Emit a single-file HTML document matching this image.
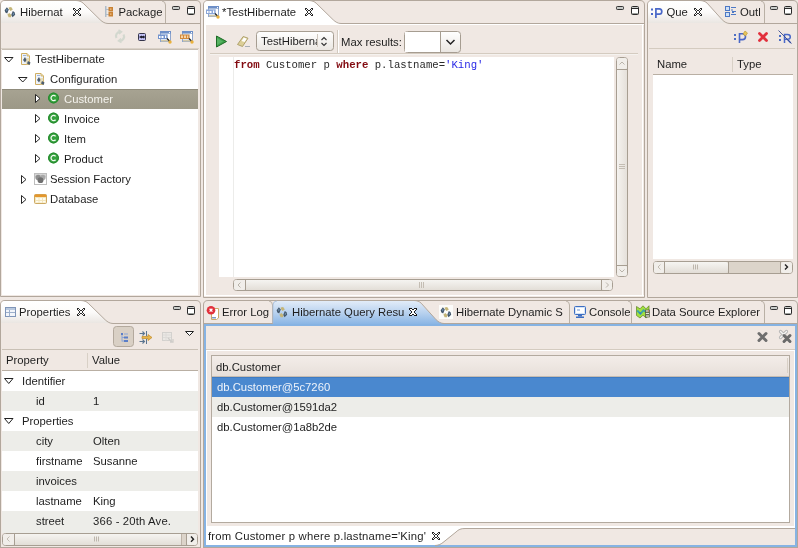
<!DOCTYPE html>
<html><head><meta charset="utf-8">
<style>
*{margin:0;padding:0}
html,body{width:798px;height:548px;overflow:hidden;background:#F0E8E3}
svg{position:absolute;left:0;top:0;will-change:transform}
text{font-family:"Liberation Sans",sans-serif;font-size:11.3px;fill:#1e1e1e}
.mono{font-family:"Liberation Mono",monospace;font-size:10.67px}
</style></head><body>
<svg width="798" height="548" viewBox="0 0 798 548">
<defs>
<linearGradient id="tabg" x1="0" y1="0" x2="0" y2="1">
<stop offset="0" stop-color="#FFFFFF"/><stop offset="0.5" stop-color="#FCFBFA"/><stop offset="1" stop-color="#EAE6E2"/>
</linearGradient>
<linearGradient id="tabblue" x1="0" y1="0" x2="0" y2="1">
<stop offset="0" stop-color="#E2ECF8"/><stop offset="0.5" stop-color="#B6D0EE"/><stop offset="1" stop-color="#82B1E3"/>
</linearGradient>
<linearGradient id="btng" x1="0" y1="0" x2="0" y2="1">
<stop offset="0" stop-color="#FFFFFF"/><stop offset="1" stop-color="#EAE6E1"/>
</linearGradient>
<linearGradient id="sbg" x1="0" y1="0" x2="1" y2="0">
<stop offset="0" stop-color="#F6F4F1"/><stop offset="1" stop-color="#E4DFD9"/>
</linearGradient>
<linearGradient id="sbh" x1="0" y1="0" x2="0" y2="1">
<stop offset="0" stop-color="#F6F5F2"/><stop offset="1" stop-color="#E2DDD6"/>
</linearGradient>
<linearGradient id="hdrg" x1="0" y1="0" x2="0" y2="1">
<stop offset="0" stop-color="#F3EDE9"/><stop offset="1" stop-color="#E7DFD9"/>
</linearGradient>
<linearGradient id="selg" x1="0" y1="0" x2="0" y2="1">
<stop offset="0" stop-color="#A7A392"/><stop offset="1" stop-color="#9C9887"/>
</linearGradient>
<g id="hib"><path d="M0.6,4.2 L2.9,1.2 L4.8,3.6 L3.2,7.6 L1.4,6.6 Z" fill="#44576B"/><path d="M2,4 L3,2.6 L3.6,3.8 L2.8,5.6 Z" fill="#6D93B3"/><path d="M4.6,1.6 L7.2,0.9 L8.8,3.4 L6.6,5 L5.2,3.4 Z" fill="#C4B577"/><path d="M7.2,9 L8.8,5 L10.6,6.2 L11.2,8.8 L8.6,11.2 Z" fill="#44576B"/><path d="M8.6,8.6 L9.2,6.6 L10,7.6 L9.6,9.2 Z" fill="#6D93B3"/><path d="M3.4,8.6 L5.4,7 L7.4,9 L7,11.2 L4.6,11.2 Z" fill="#C4B577"/></g>
<g id="cls"><circle cx="0" cy="0" r="5.4" fill="#35A23D"/><circle cx="0" cy="0" r="4.9" fill="none" stroke="#24862C" stroke-width="1"/><path d="M2.1,-1.7 A2.6,2.6 0 1 0 2.1,1.7" fill="none" stroke="#F2FAF0" stroke-width="1.3"/></g>
<g id="tri-r"><path d="M0.5,0.5 L5,4.5 L0.5,8.5 Z" fill="#FFFFFF" stroke="#1a1a1a" stroke-width="0.95" stroke-linejoin="miter"/></g>
<g id="tri-d"><path d="M0.5,0.5 L9,0.5 L4.75,5 Z" fill="#FFFFFF" stroke="#1a1a1a" stroke-width="0.95"/></g>
<g id="closex"><rect x="0" y="0" width="1" height="1" fill="#2a2a2a"/><rect x="1" y="0" width="1" height="1" fill="#2a2a2a"/><rect x="6" y="0" width="1" height="1" fill="#2a2a2a"/><rect x="7" y="0" width="1" height="1" fill="#2a2a2a"/><rect x="0" y="1" width="1" height="1" fill="#2a2a2a"/><rect x="1" y="1" width="1" height="1" fill="#FFFFFF"/><rect x="2" y="1" width="1" height="1" fill="#2a2a2a"/><rect x="5" y="1" width="1" height="1" fill="#2a2a2a"/><rect x="6" y="1" width="1" height="1" fill="#FFFFFF"/><rect x="7" y="1" width="1" height="1" fill="#2a2a2a"/><rect x="1" y="2" width="1" height="1" fill="#2a2a2a"/><rect x="2" y="2" width="1" height="1" fill="#FFFFFF"/><rect x="3" y="2" width="1" height="1" fill="#2a2a2a"/><rect x="4" y="2" width="1" height="1" fill="#2a2a2a"/><rect x="5" y="2" width="1" height="1" fill="#FFFFFF"/><rect x="6" y="2" width="1" height="1" fill="#2a2a2a"/><rect x="2" y="3" width="1" height="1" fill="#2a2a2a"/><rect x="3" y="3" width="1" height="1" fill="#FFFFFF"/><rect x="4" y="3" width="1" height="1" fill="#FFFFFF"/><rect x="5" y="3" width="1" height="1" fill="#2a2a2a"/><rect x="2" y="4" width="1" height="1" fill="#2a2a2a"/><rect x="3" y="4" width="1" height="1" fill="#FFFFFF"/><rect x="4" y="4" width="1" height="1" fill="#FFFFFF"/><rect x="5" y="4" width="1" height="1" fill="#2a2a2a"/><rect x="1" y="5" width="1" height="1" fill="#2a2a2a"/><rect x="2" y="5" width="1" height="1" fill="#FFFFFF"/><rect x="3" y="5" width="1" height="1" fill="#2a2a2a"/><rect x="4" y="5" width="1" height="1" fill="#2a2a2a"/><rect x="5" y="5" width="1" height="1" fill="#FFFFFF"/><rect x="6" y="5" width="1" height="1" fill="#2a2a2a"/><rect x="0" y="6" width="1" height="1" fill="#2a2a2a"/><rect x="1" y="6" width="1" height="1" fill="#FFFFFF"/><rect x="2" y="6" width="1" height="1" fill="#2a2a2a"/><rect x="5" y="6" width="1" height="1" fill="#2a2a2a"/><rect x="6" y="6" width="1" height="1" fill="#FFFFFF"/><rect x="7" y="6" width="1" height="1" fill="#2a2a2a"/><rect x="0" y="7" width="1" height="1" fill="#2a2a2a"/><rect x="1" y="7" width="1" height="1" fill="#2a2a2a"/><rect x="6" y="7" width="1" height="1" fill="#2a2a2a"/><rect x="7" y="7" width="1" height="1" fill="#2a2a2a"/></g>
<g id="closex2"><rect x="0" y="0" width="1" height="1" fill="#1a1a1a"/><rect x="1" y="0" width="1" height="1" fill="#1a1a1a"/><rect x="2" y="0" width="1" height="1" fill="#1a1a1a"/><rect x="5" y="0" width="1" height="1" fill="#1a1a1a"/><rect x="6" y="0" width="1" height="1" fill="#1a1a1a"/><rect x="7" y="0" width="1" height="1" fill="#1a1a1a"/><rect x="0" y="1" width="1" height="1" fill="#1a1a1a"/><rect x="1" y="1" width="1" height="1" fill="#FFFFFF"/><rect x="2" y="1" width="1" height="1" fill="#FFFFFF"/><rect x="3" y="1" width="1" height="1" fill="#1a1a1a"/><rect x="4" y="1" width="1" height="1" fill="#1a1a1a"/><rect x="5" y="1" width="1" height="1" fill="#FFFFFF"/><rect x="6" y="1" width="1" height="1" fill="#FFFFFF"/><rect x="7" y="1" width="1" height="1" fill="#1a1a1a"/><rect x="1" y="2" width="1" height="1" fill="#1a1a1a"/><rect x="2" y="2" width="1" height="1" fill="#FFFFFF"/><rect x="3" y="2" width="1" height="1" fill="#FFFFFF"/><rect x="4" y="2" width="1" height="1" fill="#FFFFFF"/><rect x="5" y="2" width="1" height="1" fill="#FFFFFF"/><rect x="6" y="2" width="1" height="1" fill="#1a1a1a"/><rect x="2" y="3" width="1" height="1" fill="#1a1a1a"/><rect x="3" y="3" width="1" height="1" fill="#FFFFFF"/><rect x="4" y="3" width="1" height="1" fill="#FFFFFF"/><rect x="5" y="3" width="1" height="1" fill="#1a1a1a"/><rect x="2" y="4" width="1" height="1" fill="#1a1a1a"/><rect x="3" y="4" width="1" height="1" fill="#FFFFFF"/><rect x="4" y="4" width="1" height="1" fill="#FFFFFF"/><rect x="5" y="4" width="1" height="1" fill="#1a1a1a"/><rect x="1" y="5" width="1" height="1" fill="#1a1a1a"/><rect x="2" y="5" width="1" height="1" fill="#FFFFFF"/><rect x="3" y="5" width="1" height="1" fill="#FFFFFF"/><rect x="4" y="5" width="1" height="1" fill="#FFFFFF"/><rect x="5" y="5" width="1" height="1" fill="#FFFFFF"/><rect x="6" y="5" width="1" height="1" fill="#1a1a1a"/><rect x="0" y="6" width="1" height="1" fill="#1a1a1a"/><rect x="1" y="6" width="1" height="1" fill="#FFFFFF"/><rect x="2" y="6" width="1" height="1" fill="#FFFFFF"/><rect x="3" y="6" width="1" height="1" fill="#1a1a1a"/><rect x="4" y="6" width="1" height="1" fill="#1a1a1a"/><rect x="5" y="6" width="1" height="1" fill="#FFFFFF"/><rect x="6" y="6" width="1" height="1" fill="#FFFFFF"/><rect x="7" y="6" width="1" height="1" fill="#1a1a1a"/><rect x="0" y="7" width="1" height="1" fill="#1a1a1a"/><rect x="1" y="7" width="1" height="1" fill="#1a1a1a"/><rect x="2" y="7" width="1" height="1" fill="#1a1a1a"/><rect x="5" y="7" width="1" height="1" fill="#1a1a1a"/><rect x="6" y="7" width="1" height="1" fill="#1a1a1a"/><rect x="7" y="7" width="1" height="1" fill="#1a1a1a"/></g>
<g id="minbtn"><rect x="0.5" y="0.5" width="7" height="3" rx="0.8" fill="#C9CCC9" stroke="#333" stroke-width="1"/></g>
<g id="maxbtn"><rect x="0.5" y="0.5" width="7" height="8" rx="1" fill="#FFFFFF" stroke="#2a2a2a" stroke-width="1"/><rect x="1" y="1" width="6" height="1" fill="#C9CCC9"/><rect x="1" y="2" width="6" height="1" fill="#2a2a2a"/><rect x="1" y="7" width="6" height="1" fill="#9A9E9A"/></g>
</defs>
<!-- ============ P1 ============ -->
<path d="M0.5,296.5 L0.5,5 Q0.5,0.5 5,0.5 L196,0.5 Q200.5,0.5 200.5,5 L200.5,296.5 Z" fill="#F0E8E3" stroke="#B2A79C"/>
<!-- active tab -->
<path d="M1,23 L1,5 Q1,1 5,1 L76,1 C79,1 81,2 83,3.5 L100,19.5 C102.5,22 105,23 108,23 Z" fill="url(#tabg)"/>
<path d="M76,0.5 C79,0.5 81.5,1.5 83.2,3.2 L100.2,19.8 C102.5,22 105,23.5 108,23.5 L200,23.5" fill="none" stroke="#B2A79C"/>
<path d="M165.5,23 L165.5,5 Q165.5,1.5 162,1" fill="none" stroke="#B9B0A5"/>
<!-- hibernate icon -->
<use href="#hib" x="4" y="6"/>
<text x="20" y="16">Hibernat</text>
<use href="#closex" x="73" y="8"/>
<!-- package icon -->
<g transform="translate(105,6)"><rect x="0" y="0" width="1.5" height="11" fill="#AEBBC8"/><rect x="1" y="3" width="3" height="1" fill="#AEBBC8"/><rect x="1" y="8" width="3" height="1" fill="#AEBBC8"/><rect x="3.5" y="1" width="4.5" height="4.5" fill="#C98234"/><rect x="3.5" y="6" width="4.5" height="4.5" fill="#C98234"/><rect x="5" y="2.5" width="1.5" height="1.2" fill="#F3C38B"/><rect x="5" y="7.5" width="1.5" height="1.2" fill="#F3C38B"/></g>
<text x="118.5" y="16">Package</text>
<use href="#minbtn" x="172" y="6"/>
<use href="#maxbtn" x="187" y="6"/>
<!-- toolbar -->
<g transform="translate(114,30)" fill="none" stroke="#D3D8CF" stroke-width="2.2"><path d="M2.5,8 A4.2,4.2 0 0 1 6,1.8"/><path d="M9.5,4.5 A4.2,4.2 0 0 1 6,10.8"/><path d="M4.5,0 L7.5,1.8 L5,4" stroke-width="1.6"/><path d="M7.5,12.5 L4.5,10.8 L7,8.5" stroke-width="1.6"/></g>
<g transform="translate(138,33)"><rect x="0.5" y="0.5" width="7" height="7" rx="1" fill="#C3C2F6" stroke="#35354A" stroke-width="1"/><path d="M1.5,4 L3.5,2.5 L4.5,3.5 L5.5,2.5 L7,4 L5.5,5.5 L4.5,4.5 L3.5,5.5 Z" fill="#202030"/><rect x="1.5" y="3.5" width="5" height="1" fill="#202030"/></g>
<g transform="translate(158,31)"><rect x="2.5" y="0.5" width="10" height="10" fill="#DDE5F0" stroke="#8FA6CE"/><rect x="2" y="0" width="11" height="2.5" fill="#6D8FC8"/><rect x="11" y="1" width="1" height="1" fill="#FFF"/><rect x="3" y="9" width="7" height="1.5" fill="#D3C9A8"/><rect x="10" y="3" width="2" height="6" fill="#FFFFFF"/><rect x="0" y="3.5" width="9.5" height="4.5" fill="#7394CE"/><rect x="1" y="5" width="1.5" height="2" fill="#FFF"/><rect x="3.5" y="5" width="2" height="2" fill="#FFF"/><rect x="7" y="4.5" width="1.2" height="2.5" fill="#FFF"/><path d="M9,7.5 L11.5,10" stroke="#222" stroke-width="1.2"/><circle cx="12" cy="11" r="1.7" fill="#EAB13A"/></g>
<g transform="translate(180,31)"><rect x="2.5" y="0.5" width="10" height="10" fill="#DDE5F0" stroke="#8FA6CE"/><rect x="2" y="0" width="11" height="2.5" fill="#6D8FC8"/><rect x="11" y="1" width="1" height="1" fill="#FFF"/><rect x="3" y="9" width="7" height="1.5" fill="#D3C9A8"/><rect x="10" y="3" width="2" height="6" fill="#FFFFFF"/><rect x="0" y="3.5" width="9.5" height="4.5" fill="#D28A3C"/><rect x="1" y="4.5" width="2" height="2.5" fill="#F6D3A8"/><rect x="4" y="4.5" width="2" height="2.5" fill="#F6D3A8"/><rect x="7" y="4.5" width="1.2" height="2.5" fill="#F6D3A8"/><path d="M9,7.5 L11.5,10" stroke="#222" stroke-width="1.2"/><circle cx="12" cy="11" r="1.7" fill="#EAB13A"/></g>
<rect x="1" y="48" width="198" height="1" fill="#D9D1C7"/>
<rect x="2" y="49" width="196" height="1" fill="#C6BDB2"/>
<!-- content -->
<rect x="2" y="50" width="196" height="245" fill="#FFFFFF"/>
<use href="#tri-d" x="4" y="57"/>
<g transform="translate(21,53)"><path d="M0.5,0.5 H6 L8.5,3 V11.5 H0.5 Z" fill="#EEF3FA" stroke="#CFAE62"/><path d="M6,0.5 V3 H8.5" fill="#E9D9A8" stroke="#CFAE62" stroke-width="0.8"/><rect x="2" y="2" width="3" height="1" fill="#9DB4D8"/><rect x="5" y="5" width="3.5" height="6.5" fill="#E3D3A0" opacity="0.7"/><path d="M2,7 L4,4 L5.5,7 L4,9.5 Z" fill="#4D5D6E"/><path d="M7,8 L9.5,9.5 L8.5,12 L6,10.5 Z" fill="#4D5D6E"/></g>
<text x="35" y="63">TestHibernate</text>
<use href="#tri-d" x="18" y="77"/>
<g transform="translate(35,73)"><path d="M0.5,0.5 H6 L8.5,3 V11.5 H0.5 Z" fill="#EEF3FA" stroke="#CFAE62"/><path d="M6,0.5 V3 H8.5" fill="#E9D9A8" stroke="#CFAE62" stroke-width="0.8"/><rect x="2" y="2" width="3" height="1" fill="#9DB4D8"/><rect x="5" y="5" width="3.5" height="6.5" fill="#E3D3A0" opacity="0.7"/><path d="M2,7 L4,4 L5.5,7 L4,9.5 Z" fill="#4D5D6E"/><path d="M7,8 L9.5,9.5 L8.5,12 L6,10.5 Z" fill="#4D5D6E"/></g>
<text x="50" y="83">Configuration</text>
<rect x="2" y="89" width="196" height="20" fill="url(#selg)"/>
<rect x="2" y="89" width="196" height="1" fill="#8F8B7B"/>
<use href="#tri-r" x="35" y="94"/>
<use href="#cls" x="53.5" y="98"/>
<text x="64" y="103" style="fill:#F4F2EC">Customer</text>
<use href="#tri-r" x="35" y="114"/>
<use href="#cls" x="53.5" y="118"/>
<text x="64" y="123">Invoice</text>
<use href="#tri-r" x="35" y="134"/>
<use href="#cls" x="53.5" y="138"/>
<text x="64" y="143">Item</text>
<use href="#tri-r" x="35" y="154"/>
<use href="#cls" x="53.5" y="158"/>
<text x="64" y="163">Product</text>
<use href="#tri-r" x="21" y="175"/>
<g transform="translate(34,173)"><rect x="0.5" y="0.5" width="12" height="11" fill="#FFFFFF" stroke="#BDBDBD"/><rect x="1" y="1" width="11" height="3" fill="#D6D6D6"/><circle cx="4.2" cy="4.5" r="2.8" fill="#8E8E8E"/><circle cx="8.8" cy="4.5" r="2.8" fill="#A8A8A8"/><circle cx="6.5" cy="7.2" r="2.9" fill="#707070"/></g>
<text x="50" y="183">Session Factory</text>
<use href="#tri-r" x="21" y="195"/>
<g transform="translate(34,194)"><rect x="0.5" y="0.5" width="12" height="9" rx="1" fill="#F3E6BE" stroke="#CDA962"/><rect x="0.5" y="0.5" width="12" height="2.5" rx="1" fill="#E4962C"/><rect x="2" y="4" width="2.5" height="2" fill="#FFFCEF"/><rect x="5.5" y="4" width="2.5" height="2" fill="#FFFCEF"/><rect x="9" y="4" width="2.5" height="2" fill="#FFFCEF"/><rect x="2" y="7" width="2.5" height="1.5" fill="#FFFCEF"/><rect x="5.5" y="7" width="2.5" height="1.5" fill="#FFFCEF"/><rect x="9" y="7" width="2.5" height="1.5" fill="#FFFCEF"/></g>
<text x="50" y="203">Database</text>
<!-- ============ P2 editor ============ -->
<path d="M203.5,297.5 L203.5,5 Q203.5,0.5 208,0.5 L640,0.5 Q644.5,0.5 644.5,5 L644.5,297.5 Z" fill="#F0E8E3" stroke="#B2A79C"/>
<path d="M204,24 L204,5 Q204,1 208,1 L309,1 C312,1 314,2 316,3.5 L333,19.5 C335.5,22 338,23 341,23 L644,23 L644,25 L204,25 Z" fill="#FFFFFF"/>
<path d="M309,0.5 C312,0.5 314.5,1.5 316.2,3.2 L333.2,19.8 C335.5,22 338,23.5 341,23.5 L644,23.5" fill="none" stroke="#B2A79C"/>
<rect x="204" y="24" width="440" height="1" fill="#FFFFFF"/>
<rect x="204" y="24" width="2" height="272" fill="#FFFFFF"/>
<rect x="204" y="295" width="440" height="1" fill="#FFFFFF"/>
<rect x="642" y="24" width="1" height="272" fill="#FFFFFF"/>
<!-- editor tab icon -->
<g transform="translate(206,6)"><rect x="2.5" y="0.5" width="10" height="10" fill="#DDE5F0" stroke="#8FA6CE"/><rect x="2" y="0" width="11" height="2.5" fill="#6D8FC8"/><rect x="11" y="1" width="1" height="1" fill="#FFF"/><rect x="3" y="9" width="7" height="1.5" fill="#D3C9A8"/><rect x="10" y="3" width="2" height="6" fill="#FFFFFF"/><rect x="0" y="3.5" width="9.5" height="4.5" fill="#8AA6D8"/><rect x="1" y="5" width="1.5" height="2" fill="#FFF"/><rect x="3.5" y="5" width="2" height="2" fill="#FFF"/><rect x="7" y="4.5" width="1.2" height="2.5" fill="#FFF"/><path d="M9,7.5 L11.5,10" stroke="#222" stroke-width="1.2"/><circle cx="12" cy="11" r="1.7" fill="#EAB13A"/></g>
<text x="222" y="16">*TestHibernate</text>
<use href="#closex" x="305" y="8"/>
<use href="#minbtn" x="616" y="6"/>
<use href="#maxbtn" x="631" y="6"/>
<!-- toolbar -->
<path d="M216.5,36 L226.5,41.5 L216.5,47 Z" fill="#3DA14A" stroke="#1E6B26" stroke-width="1"/>
<path d="M217,38 L223,41.5 L217,45 Z" fill="#6CC077" opacity="0.6"/>
<path d="M237.5,44.5 L243.2,36.5 L248,38.2 L242.5,46.5 Z" fill="#DCCF98" stroke="#A99B63" stroke-width="0.9" stroke-linejoin="round"/><path d="M243.8,37.6 L246.8,38.7 L244.6,42 L241.5,40.9 Z" fill="#FFFFFF"/><path d="M245,46.5 h5" stroke="#A7AEB5" stroke-width="1"/>
<rect x="256.5" y="31.5" width="77" height="19" rx="3" fill="url(#btng)" stroke="#A69D91"/>
<svg x="257" y="32" width="60" height="18"><text x="4" y="13">TestHibernate</text></svg>
<rect x="317" y="34" width="1" height="13" fill="#CFC7BD"/>
<path d="M321.5,40 L324,37.5 L326.5,40 M321.5,43 L324,45.5 L326.5,43" fill="none" stroke="#333" stroke-width="1.1"/>
<rect x="337" y="30" width="1" height="23" fill="#D3CBC1"/>
<rect x="338" y="30" width="1" height="23" fill="#FFFFFF"/>
<text x="341" y="46">Max results:</text>
<rect x="404.5" y="31.5" width="56" height="21" rx="3" fill="url(#btng)" stroke="#A69D91"/>
<rect x="405" y="32" width="35" height="20" fill="#FFFFFF"/>
<rect x="440" y="32" width="1" height="20" fill="#A69D91"/>
<path d="M446.5,40 L450.5,44 L454.5,40" fill="none" stroke="#222" stroke-width="1.5"/>
<rect x="210" y="53" width="428" height="1" fill="#D4CBC0"/>
<rect x="210" y="54" width="428" height="1" fill="#F5F2EF"/>
<!-- code area -->
<rect x="219" y="57" width="395" height="220" fill="#FFFFFF"/>
<rect x="233" y="57" width="1" height="220" fill="#ECECEA"/>
<text class="mono" x="234" y="68"><tspan style="font-weight:bold;fill:#820A10">from</tspan><tspan style="fill:#2b2b2b"> Customer p </tspan><tspan style="font-weight:bold;fill:#820A10">where</tspan><tspan style="fill:#2b2b2b"> p.lastname=</tspan><tspan style="fill:#2A2AE6">'King'</tspan></text>
<!-- v scrollbar -->
<rect x="616.5" y="57.5" width="11" height="219" rx="3" fill="url(#sbg)" stroke="#A79E92"/>
<rect x="617" y="69" width="10" height="1" fill="#A79E92"/>
<rect x="617" y="265" width="10" height="1" fill="#A79E92"/>
<rect x="617" y="58" width="10" height="11" rx="2" fill="#F1EEEA"/>
<rect x="617" y="266" width="10" height="10" rx="2" fill="#F1EEEA"/>
<path d="M619.5,64.5 L622,62 L624.5,64.5" fill="none" stroke="#B9B3AA" stroke-width="1"/>
<path d="M619.5,269.5 L622,272 L624.5,269.5" fill="none" stroke="#B9B3AA" stroke-width="1"/>
<path d="M619,164.5 h6 M619,166.5 h6 M619,168.5 h6" stroke="#C4BDB3" stroke-width="1"/>
<!-- h scrollbar -->
<rect x="233.5" y="279.5" width="379" height="11" rx="3" fill="url(#sbh)" stroke="#A79E92"/>
<rect x="245" y="280" width="1" height="10" fill="#A79E92"/>
<rect x="601" y="280" width="1" height="10" fill="#A79E92"/>
<rect x="234" y="280" width="11" height="10" rx="2" fill="#F1EEEA"/>
<rect x="602" y="280" width="10" height="10" rx="2" fill="#F1EEEA"/>
<path d="M240.5,282.5 L238,285 L240.5,287.5" fill="none" stroke="#B9B3AA" stroke-width="1"/>
<path d="M606,282.5 L608.5,285 L606,287.5" fill="none" stroke="#B9B3AA" stroke-width="1"/>
<path d="M419.5,282 v6 M421.5,282 v6 M423.5,282 v6" stroke="#C4BDB3" stroke-width="1"/>
<!-- ============ P3 right ============ -->
<path d="M647.5,297.5 L647.5,5 Q647.5,0.5 652,0.5 L793,0.5 Q797.5,0.5 797.5,5 L797.5,297.5 Z" fill="#F0E8E3" stroke="#B2A79C"/>
<path d="M648,23 L648,5 Q648,1 652,1 L700,1 C703,1 705,2 707,3.5 L722,19.5 C724.5,22 727,23 730,23 Z" fill="url(#tabg)"/>
<path d="M700,0.5 C703,0.5 705.5,1.5 707.2,3.2 L722.2,19.8 C724.5,22 727,23.5 730,23.5 L797,23.5" fill="none" stroke="#B2A79C"/>
<path d="M764.5,23 L764.5,5 Q764.5,1.5 761,1" fill="none" stroke="#B9B0A5"/>
<!-- :P icon -->
<g fill="#4A68C8"><rect x="651" y="8.5" width="2" height="2"/><rect x="651" y="13" width="2" height="2"/></g>
<path d="M655.9,18 V8.8 H659.3 Q661.8,8.8 661.8,11.5 Q661.8,14.2 659.3,14.2 H655.9" fill="none" stroke="#4A68C8" stroke-width="1.7"/>
<text x="666.5" y="16">Que</text>
<use href="#closex" x="694" y="8"/>
<!-- outline icon -->
<g transform="translate(725,6)"><rect x="0.5" y="0.5" width="4" height="4" fill="#CFE0F5" stroke="#4D78C4"/><rect x="0.5" y="6.5" width="4" height="4" fill="#CFE0F5" stroke="#4D78C4"/><path d="M6,1.5 h5 M6,4 h2 M8,5.5 h3 M6,8.5 h5" stroke="#4D78C4" stroke-width="1"/><rect x="7" y="5" width="2" height="2" fill="#4D78C4"/></g>
<text x="740" y="16">Outl</text>
<use href="#minbtn" x="770" y="6"/>
<use href="#maxbtn" x="784" y="6"/>
<!-- toolbar icons -->
<g fill="#4D6EC4"><rect x="734" y="34" width="2" height="2"/><rect x="734" y="38" width="2" height="2"/></g>
<path d="M739.5,43 V33.8 H742.5 Q745.5,33.8 745.5,36.8 Q745.5,39.6 742.5,39.6 H739.5" fill="none" stroke="#4A68C8" stroke-width="1.6"/>
<path d="M743,34 L745,31 L747.5,33 L745.5,36 Z" fill="#E7C55A" stroke="#B8952E" stroke-width="0.6"/>
<path d="M759.5,33.5 L766.5,40.5 M766.5,33.5 L759.5,40.5" stroke="#E2303C" stroke-width="2.8" stroke-linecap="round"/>
<g fill="#4D6EC4"><rect x="779" y="35" width="2" height="2"/><rect x="779" y="39" width="2" height="2"/></g>
<path d="M784.5,43 V34.5 H787.5 Q790.3,34.5 790.3,37 Q790.3,39.3 787.5,39.3 H784.5 M787.3,39.3 L790.8,43" fill="none" stroke="#4A68C8" stroke-width="1.5"/>
<path d="M778.5,30.5 L791.5,43.5" stroke="#34488E" stroke-width="0.9"/>
<rect x="649" y="48" width="146" height="1" fill="#D4CBC0"/>
<!-- table header -->
<text x="657" y="68">Name</text>
<rect x="732" y="57" width="1" height="15" fill="#D8D0C6"/>
<text x="737" y="68">Type</text>
<rect x="653" y="74" width="140" height="1" fill="#B9AFA3"/>
<rect x="653" y="75" width="140" height="184" fill="#FFFFFF"/>
<!-- h scrollbar -->
<rect x="653.5" y="261.5" width="139" height="12" rx="3" fill="#DCD4CA" stroke="#A79E92"/>
<rect x="654" y="262" width="74" height="11" rx="2" fill="url(#sbh)"/>
<rect x="664" y="262" width="1" height="11" fill="#A79E92"/>
<rect x="728" y="262" width="1" height="11" fill="#A79E92"/>
<rect x="780" y="262" width="1" height="11" fill="#A79E92"/>
<rect x="654" y="262" width="10" height="11" rx="2" fill="#F1EEEA"/>
<rect x="781" y="262" width="11" height="11" rx="2" fill="#F1EEEA"/>
<path d="M660.5,264.5 L658,267 L660.5,269.5" fill="none" stroke="#C3BDB4" stroke-width="1"/>
<path d="M785,264.5 L787.5,267 L785,269.5" fill="none" stroke="#222" stroke-width="1.4"/>
<path d="M693.5,264.5 v5 M695.5,264.5 v5 M697.5,264.5 v5" stroke="#BDB6AC" stroke-width="1"/>
<!-- ============ P4 properties ============ -->
<path d="M0.5,548 L0.5,305 Q0.5,300.5 5,300.5 L196,300.5 Q200.5,300.5 200.5,305 L200.5,548" fill="#F0E8E3" stroke="#B2A79C"/>
<rect x="0" y="547" width="201" height="1" fill="#B2A79C"/>
<path d="M1,323 L1,305 Q1,301 5,301 L81,301 C84,301 86,302 88,303.5 L105,319.5 C107.5,322 110,323 113,323 Z" fill="url(#tabg)"/>
<path d="M81,300.5 C84,300.5 86.5,301.5 88.2,303.2 L105.2,319.8 C107.5,322 110,323.5 113,323.5 L200,323.5" fill="none" stroke="#B2A79C"/>
<g transform="translate(5,307)"><rect x="0.5" y="0.5" width="10" height="9" fill="#F2F5FA" stroke="#7F95B8"/><rect x="1" y="1" width="9" height="2" fill="#B8C8DE"/><path d="M1,5.5 h9 M4.5,3 v6.5" stroke="#9DB0CC" stroke-width="1"/></g>
<text x="19" y="316">Properties</text>
<use href="#closex" x="77" y="308"/>
<use href="#minbtn" x="173" y="306"/>
<use href="#maxbtn" x="187" y="306"/>
<!-- toolbar -->
<rect x="113.5" y="326.5" width="20" height="20" rx="3" fill="#D9D0C5" stroke="#B3A99D"/>
<g transform="translate(120,333)" fill="#5A7EC8"><rect x="1" y="0" width="2" height="2"/><rect x="4" y="0.5" width="4" height="1" fill="#8DA6D8"/><rect x="4" y="3.5" width="4" height="2"/><rect x="4" y="7" width="4" height="2"/><rect x="1.5" y="2" width="1" height="6.5" fill="#8DA6D8"/><rect x="2" y="4" width="2" height="1" fill="#8DA6D8"/><rect x="2" y="7.5" width="2" height="1" fill="#8DA6D8"/></g>
<g transform="translate(139,331)"><path d="M0.5,2.5 h5 M3.5,0.5 L5.5,2.5 L3.5,4.5 M0.5,10.5 h5 M3.5,8.5 L5.5,10.5 L3.5,12.5" stroke="#5B7590" stroke-width="1.1" fill="none"/><path d="M7.5,0 v5 M7.5,8 v5" stroke="#5B7590" stroke-width="1"/><path d="M3,5.5 h6 v-2 l4,3 l-4,3 v-2 h-6 Z" fill="#E7B64A" stroke="#C08A2A" stroke-width="0.7"/></g>
<g transform="translate(162,332)" opacity="0.5"><rect x="0.5" y="0.5" width="9" height="8" fill="#E6E8E6" stroke="#B8BCBA"/><path d="M1,3 h8 M1,5.5 h8 M4,1 v7.5" stroke="#CCD0CE" stroke-width="1"/><path d="M6,6 L10,10 M8,10 h3 v-3" stroke="#AEB2B0" stroke-width="1.3" fill="none"/></g>
<path d="M185.5,331.5 L193.5,331.5 L189.5,335.5 Z" fill="#FFFFFF" stroke="#222" stroke-width="1"/>
<rect x="2" y="349" width="196" height="1" fill="#C9C0B5"/>
<!-- header -->
<text x="6" y="364">Property</text>
<rect x="87" y="353" width="1" height="15" fill="#D8D0C6"/>
<text x="92" y="364">Value</text>
<rect x="2" y="370" width="196" height="1" fill="#B9AFA3"/>
<!-- rows -->
<rect x="2" y="371" width="196" height="161" fill="#FFFFFF"/>
<rect x="2" y="391" width="196" height="20" fill="#EDEDE9"/>
<rect x="2" y="431" width="196" height="20" fill="#EDEDE9"/>
<rect x="2" y="471" width="196" height="20" fill="#EDEDE9"/>
<rect x="2" y="511" width="196" height="22" fill="#EDEDE9"/>
<path d="M4.5,378.5 L13,378.5 L8.75,383.5 Z" fill="#FFFFFF" stroke="#222" stroke-width="1"/>
<text x="22" y="385">Identifier</text>
<text x="36" y="405">id</text><text x="93" y="405">1</text>
<path d="M4.5,418.5 L13,418.5 L8.75,423.5 Z" fill="#FFFFFF" stroke="#222" stroke-width="1"/>
<text x="22" y="425">Properties</text>
<text x="36" y="445">city</text><text x="93" y="445">Olten</text>
<text x="36" y="465">firstname</text><text x="93" y="465">Susanne</text>
<text x="36" y="485">invoices</text>
<text x="36" y="505">lastname</text><text x="93" y="505">King</text>
<text x="36" y="525">street</text><text x="93" y="525" textLength="78" lengthAdjust="spacing">366 - 20th Ave.</text>
<!-- h scrollbar -->
<rect x="2.5" y="533.5" width="195" height="12" rx="3" fill="url(#sbh)" stroke="#A79E92"/>
<rect x="14" y="534" width="1" height="11" fill="#A79E92"/>
<rect x="186" y="534" width="1" height="11" fill="#A79E92"/>
<rect x="3" y="534" width="11" height="11" rx="2" fill="#F1EEEA"/>
<rect x="187" y="534" width="10" height="11" rx="2" fill="#F1EEEA"/>
<path d="M9.5,536.5 L7,539 L9.5,541.5" fill="none" stroke="#C3BDB4" stroke-width="1"/>
<path d="M191,536.5 L193.5,539.2 L191,541.8" fill="none" stroke="#222" stroke-width="1.4"/>
<path d="M94.5,536.5 v5 M96.5,536.5 v5 M98.5,536.5 v5" stroke="#BDB6AC" stroke-width="1"/>
<rect x="181" y="534" width="5" height="11" fill="#DCD4CA"/><rect x="181" y="534" width="1" height="11" fill="#BDB3A8"/>
<!-- ============ P5 results ============ -->
<path d="M203.5,548 L203.5,305 Q203.5,300.5 208,300.5 L793,300.5 Q797.5,300.5 797.5,305 L797.5,548" fill="#F0E8E3" stroke="#B2A79C"/>
<rect x="203" y="547" width="595" height="1" fill="#B2A79C"/>
<!-- inactive tab separators -->
<path d="M272.5,323 L272.5,305 Q272.5,301.5 269,301" fill="none" stroke="#B9B0A5"/>
<path d="M569.5,323 L569.5,305 Q569.5,301.5 566,301" fill="none" stroke="#B9B0A5"/>
<path d="M631.5,323 L631.5,305 Q631.5,301.5 628,301" fill="none" stroke="#B9B0A5"/>
<path d="M764.5,323 L764.5,305 Q764.5,301.5 761,301" fill="none" stroke="#B9B0A5"/>
<rect x="204" y="323" width="593" height="1" fill="#B2A79C"/>
<!-- active blue tab -->
<path d="M273,326 L273,305 Q273,301 277,301 L414,301 C417,301 419,302 421,303.5 L436,319.5 C438.5,322 441,323.5 444,323.5 L444,326 Z" fill="url(#tabblue)"/>
<path d="M414,300.5 C417,300.5 419.5,301.5 421.2,303.2 L436.2,319.8 C438.5,322 441,323.5 444,323.5" fill="none" stroke="#B2A79C"/>
<path d="M273,323.5 L273,305 Q273,301 277,301" fill="none" stroke="#A6BEDA" stroke-width="0.8"/>
<!-- blue border -->
<rect x="204" y="324" width="593" height="2" fill="#86B3E3"/>
<rect x="204" y="324" width="2" height="223" fill="#86B3E3"/>
<rect x="795" y="324" width="2" height="223" fill="#86B3E3"/>
<rect x="204" y="545" width="593" height="2" fill="#86B3E3"/>
<!-- tab contents -->
<g transform="translate(207,306)"><path d="M4.5,2.5 H11.5 V12 L9.5,13.5 H4.5 Z" fill="#FFFFFF" stroke="#C9A968" stroke-width="1"/><rect x="5" y="11" width="4" height="1.5" fill="#7E9AC6"/><circle cx="4" cy="4.2" r="4.3" fill="#E2303B"/><path d="M2.6,2.8 L5.4,5.6 M5.4,2.8 L2.6,5.6" stroke="#FFFFFF" stroke-width="1.3"/></g>
<text x="222" y="316">Error Log</text>
<use href="#hib" x="276" y="306"/>
<text x="292" y="316">Hibernate Query Resu</text>
<use href="#closex2" x="409" y="308"/>
<rect x="439" y="305" width="14" height="14" fill="#FCFCFA"/>
<use href="#hib" x="440" y="306"/>
<text x="456" y="316">Hibernate Dynamic S</text>
<g transform="translate(574,306)"><rect x="0.5" y="0.5" width="11" height="8" rx="1" fill="#D5E4F7" stroke="#3D6EC2"/><rect x="2" y="2" width="8" height="5" fill="#FFFFFF"/><path d="M3,4 h3" stroke="#6E93D0" stroke-width="1"/><rect x="4" y="9" width="4" height="1.5" fill="#3D6EC2"/><rect x="2" y="10.5" width="8" height="1.5" fill="#3D6EC2"/></g>
<text x="589" y="316">Console</text>
<path d="M636.5,306.5 L640,308.8 L643,305.8 L646,308.8 L649,305.8 V315.5 L646,318 L643,315.2 L640,318 L636.5,315.5 Z" fill="#A2E03C" stroke="#6A8A30" stroke-width="0.8"/><path d="M637.2,310.5 L640.5,313.8 L643.5,310.2 L646,312" fill="none" stroke="#3BA7A4" stroke-width="1.9"/><path d="M639.5,312.5 L641,313.5" stroke="#4466CC" stroke-width="1.2"/><g fill="#E6E6DC" stroke="#4D5540" stroke-width="0.7"><rect x="645.5" y="310" width="4" height="2"/><rect x="645.5" y="312.5" width="4" height="2"/><rect x="645.5" y="315" width="4" height="2"/></g><rect x="648" y="310.5" width="1" height="1" fill="#E06030"/>
<text x="652" y="316">Data Source Explorer</text>
<use href="#minbtn" x="770" y="306"/>
<use href="#maxbtn" x="784" y="306"/>
<!-- toolbar icons -->
<path d="M759,333.5 L766,340.5 M766,333.5 L759,340.5" stroke="#6E6E6E" stroke-width="3" stroke-linecap="round"/>
<path d="M780.5,331.5 L786.5,337.5 M786.5,331.5 L780.5,337.5" stroke="#B5B5B5" stroke-width="3.2" stroke-linecap="round"/>
<path d="M780.5,331.5 L786.5,337.5 M786.5,331.5 L780.5,337.5" stroke="#F4F4F2" stroke-width="1.4" stroke-linecap="round"/>
<path d="M784,335.5 L790,341.5 M790,335.5 L784,341.5" stroke="#6A6A6A" stroke-width="3" stroke-linecap="round"/>
<rect x="206" y="349" width="589" height="1" fill="#D4CBC0"/>
<rect x="206" y="350" width="589" height="1" fill="#FFFFFF"/>
<rect x="206" y="350" width="1" height="177" fill="#FFFFFF"/>
<rect x="794" y="350" width="1" height="178" fill="#FFFFFF"/>
<!-- table -->
<rect x="211.5" y="355.5" width="578" height="167" fill="#FFFFFF" stroke="#B3AA9F"/>
<rect x="212" y="356" width="577" height="21" fill="url(#hdrg)"/>
<rect x="212" y="376" width="577" height="1" fill="#C6BDB2"/>
<rect x="787" y="358" width="1" height="15" fill="#D8D0C6"/>
<text x="216" y="371">db.Customer</text>
<rect x="212" y="377" width="577" height="20" fill="#4A88CF"/>
<rect x="212" y="377" width="577" height="1" fill="#3F7BC2"/>
<text x="217" y="391" style="fill:#EEF3FA">db.Customer@5c7260</text>
<rect x="212" y="397" width="577" height="20" fill="#EDEDE9"/>
<text x="217" y="411">db.Customer@1591da2</text>
<text x="217" y="431">db.Customer@1a8b2de</text>
<!-- bottom tab -->
<path d="M206,545 L206,526 L794,526 L794,528 L465,528 C461,528 458.5,529.5 456,532 L443,542 C440.5,544 438,545 435,545 Z" fill="#FFFFFF"/>
<path d="M435,545.5 C438,545.5 440.5,544.5 443,542.5 L456,532 C458.5,529.5 461,528.5 465,528.5 L795,528.5" fill="none" stroke="#B2A79C"/>
<text x="208" y="540" textLength="218" lengthAdjust="spacing">from Customer p where p.lastname='King'</text>
<use href="#closex" x="432" y="532"/>
</svg>
</body></html>
